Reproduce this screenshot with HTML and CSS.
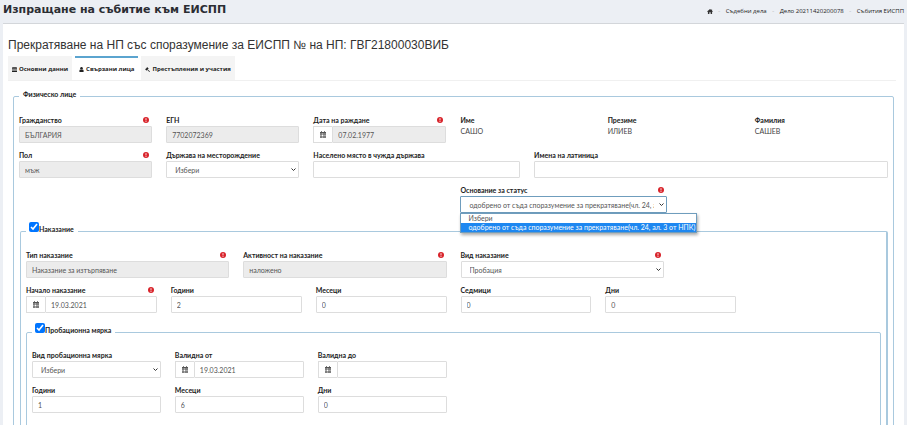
FILE: index.html
```html
<!DOCTYPE html>
<html lang="bg">
<head>
<meta charset="utf-8">
<title>Изпращане на събитие към ЕИСПП</title>
<link rel="stylesheet" href="styles.css">
</head>
<body>
<svg class="sprite" aria-hidden="true">
  <symbol id="alert" viewBox="0 0 12 12"><circle cx="6" cy="6" r="6" fill="#d8232a"/><path d="M5 2.500h2L6.700 7H5.300zM5 8h2v1.700H5z" fill="#fff"/></symbol>
  <symbol id="calendar" viewBox="0 0 14 14"><path fill="#555" fill-rule="evenodd" d="M1 2h2V.5h2V2h4V.5h2V2h2v12H1zM2 5v2h2V5zM5 5v2h2V5zM8 5v2h1.500V5zM10.500 5v2H12V5zM2 8v2h2V8zM5 8v2h2V8zM8 8v2h1.500V8zM10.500 8v2H12V8zM2 11v2h2v-2zM5 11v2h2v-2zM8 11v2h1.500v-2zM10.500 11v2H12v-2z"/></symbol>
  <symbol id="chevron" viewBox="0 0 10 6"><path d="M1 1l4 4 4-4" fill="none" stroke="#333" stroke-width="2"/></symbol>
</svg>

<header class="topbar">
  <h1>Изпращане на събитие към ЕИСПП</h1>
  <nav class="crumbs" aria-label="Навигация">
    <a href="#" aria-label="Начало"><svg class="home" viewBox="0 0 14 12"><path fill="#333" d="M7 0l3 2.600V1h2v3.300L14 6l-1 1-1-.8V12H8.500V8h-3v4H2V6.200L1 7 0 6z"/></svg></a>
    <span class="sep">-</span><a href="#">Съдебни дела</a>
    <span class="sep">-</span><a href="#">Дело 20211420200078</a>
    <span class="sep">-</span><a href="#">Събития ЕИСПП</a>
  </nav>
</header>

<main class="panel">
  <h2>Прекратяване на НП със споразумение за ЕИСПП № на НП: ГВГ21800030ВИБ</h2>

  <nav class="tabs">
    <a class="tab" href="#"><svg viewBox="0 0 12 12"><path fill="#222" d="M0 2l1-2h10l1 2zM0 3h12v2H0zM0 6h12v2H0zM0 9h12v3H0z"/></svg>Основни данни</a>
    <a class="tab active" href="#"><svg viewBox="0 0 12 12"><circle cx="6" cy="3" r="3" fill="#222"/><path fill="#222" d="M1 12V9q0-3 3-3h4q3 0 3 3v3z"/></svg>Свързани лица</a>
    <a class="tab" href="#"><svg viewBox="0 0 12 12"><path fill="#222" d="M5 0l4 4-1 1-1-.5-1 1L12 10.500 10.500 12 5 6.500l-1 1L4.500 8 3.500 9 0 5l1-1 .5.5 3-3L4 1z"/></svg>Престъпления и участия</a>
  </nav>

  <fieldset class="group">
    <legend>Физическо лице</legend>
    <div class="grid">
      <div class="field s2"><label for="cit">Гражданство<svg><use href="#alert"/></svg></label><input id="cit" value="БЪЛГАРИЯ" disabled></div>
      <div class="field s2"><label for="egn">ЕГН</label><input id="egn" value="7702072369" disabled></div>
      <div class="field s2"><label for="born">Дата на раждане<svg><use href="#alert"/></svg></label><div class="date"><svg><use href="#calendar"/></svg><input id="born" value="07.02.1977" disabled></div></div>
      <div class="field s2"><span class="name">Име</span><span class="value">САШО</span></div>
      <div class="field s2"><span class="name">Презиме</span><span class="value">ИЛИЕВ</span></div>
      <div class="field s2"><span class="name">Фамилия</span><span class="value">САШЕВ</span></div>

      <div class="field s2"><label for="sex">Пол<svg><use href="#alert"/></svg></label><input id="sex" value="мъж" disabled></div>
      <div class="field s2"><label for="country">Държава на месторождение</label><div class="select"><select id="country"><option>Избери</option></select><svg><use href="#chevron"/></svg></div></div>
      <div class="field s3"><label for="town">Населено място в чужда държава</label><input id="town"></div>
      <div class="field s5"><label for="latin">Имена на латиница</label><input id="latin"></div>

      <div class="field s3 status"><label for="basis">Основание за статус<svg><use href="#alert"/></svg></label>
        <div class="select open"><select id="basis"><option>одобрено от съда споразумение за прекратяване(чл. 24, ал. 3 от НПК)</option></select><svg><use href="#chevron"/></svg>
          <ul class="menu"><li>Избери</li><li class="chosen">одобрено от съда споразумение за прекратяване(чл. 24, ал. 3 от НПК)</li></ul>
        </div>
      </div>
    </div>

    <fieldset class="group inner">
      <legend><input type="checkbox" id="pen" checked><label for="pen">Наказание</label></legend>
      <div class="grid">
        <div class="field s3"><label for="ptype">Тип наказание<svg><use href="#alert"/></svg></label><input id="ptype" value="Наказание за изтърпяване" disabled></div>
        <div class="field s3"><label for="pact">Активност на наказание<svg><use href="#alert"/></svg></label><input id="pact" value="наложено" disabled></div>
        <div class="field s3"><label for="pkind">Вид наказание<svg><use href="#alert"/></svg></label><div class="select"><select id="pkind"><option>Пробация</option></select><svg><use href="#chevron"/></svg></div></div>
      </div>
      <div class="grid">
        <div class="field s2"><label for="pstart">Начало наказание<svg><use href="#alert"/></svg></label><div class="date"><svg><use href="#calendar"/></svg><input id="pstart" value="19.03.2021"></div></div>
        <div class="field s2"><label for="py">Години</label><input id="py" value="2"></div>
        <div class="field s2"><label for="pm">Месеци</label><input id="pm" value="0"></div>
        <div class="field s2"><label for="pw">Седмици</label><input id="pw" value="0"></div>
        <div class="field s2"><label for="pd">Дни</label><input id="pd" value="0"></div>
      </div>

      <fieldset class="group inner measure">
        <legend><input type="checkbox" id="mea" checked><label for="mea">Пробационна мярка</label></legend>
        <div class="grid">
          <div class="field s2"><label for="mkind">Вид пробационна мярка</label><div class="select"><select id="mkind"><option>Избери</option></select><svg><use href="#chevron"/></svg></div></div>
          <div class="field s2"><label for="mfrom">Валидна от</label><div class="date"><svg><use href="#calendar"/></svg><input id="mfrom" value="19.03.2021"></div></div>
          <div class="field s2"><label for="mto">Валидна до</label><div class="date"><svg><use href="#calendar"/></svg><input id="mto"></div></div>
        </div>
        <div class="grid">
          <div class="field s2"><label for="my">Години</label><input id="my" value="1"></div>
          <div class="field s2"><label for="mm">Месеци</label><input id="mm" value="6"></div>
          <div class="field s2"><label for="md">Дни</label><input id="md" value="0"></div>
        </div>
      </fieldset>
    </fieldset>
  </fieldset>
</main>
</body>
</html>
```

FILE: styles.css
```css
* { box-sizing: border-box; }
html { scrollbar-width: none; }
body {
  margin: 0;
  padding: 0 3px;
  background: #eceff4;
  color: #222;
  font: 7px/10px Lato, "Open Sans", sans-serif;
}
a { color: inherit; text-decoration: none; }
.sprite { display: none; }

.topbar {
  display: flex;
  justify-content: space-between;
  height: 24px;
  border-bottom: 1px solid #d3d6da;
}
h1 {
  margin: 0;
  font: bold 11px/19px "DejaVu Sans", sans-serif;
  color: #2b2d33;
}
.crumbs {
  display: flex;
  align-items: center;
  height: 22px;
  font-family: "Open Sans", sans-serif;
  font-size: 6px;
}
.home { display: block; width: 6px; height: 5px; }
.sep { width: 13px; text-align: center; color: #aaa; }

.panel { background: #fff; padding: 12px 8px 0 5px; }
h2 {
  margin: 0;
  font: 12px/18px "Liberation Sans", sans-serif;
  color: #333;
}
.tabs {
  display: flex;
  gap: 3px;
  margin-top: 2px;
  border-bottom: 1px solid #f0f0f0;
  font-family: "Open Sans", sans-serif;
  font-size: 6px;
  font-weight: bold;
}
.tab {
  display: flex;
  align-items: center;
  gap: 2px;
  height: 24px;
  padding: 0 4px;
  border-top: 2px solid #f4f4f4;
  background: #f4f4f4;
}
.tab svg { width: 5px; height: 5px; }
.tab.active { border-color: #5ba4cf; background: #fff; }

.group {
  min-width: 0;
  margin: 8px 2px 0 5px;
  padding: 11px 5px 10px;
  border: 1px solid #a9c9de;
  border-radius: 2px;
}
legend {
  display: flex;
  align-items: flex-start;
  height: 15px;
  padding: 0 4px;
  font-size: 7px;
  font-weight: bold;
}
.inner { margin: 9px 0 0 1px; padding-top: 9px; border-right-width: 2px; }
.inner > legend { padding-left: 3px; height: 19px; line-height: 15px; }
.measure { margin: 10px 0 0; padding: 8px 5px 14px; border-right-width: 1px; }
legend input { width: 10px; height: 10px; margin: 0; }

.grid {
  display: grid;
  grid-template-columns: repeat(12, minmax(0, 1fr));
  gap: 7px 14px;
}
.grid + .grid { margin-top: 7px; }
.s2 { grid-column: span 2; }
.s3 { grid-column: span 3; }
.s5 { grid-column: span 5; }
.status { grid-column: 7 / span 3; }

.field { display: flex; flex-direction: column; gap: 1px; min-width: 0; }
.field > label, .name {
  display: flex;
  align-items: center;
  justify-content: space-between;
  height: 10px;
  padding-right: 3px;
  font-size: 7px;
  font-weight: bold;
  white-space: nowrap;
}
.field > label svg { width: 6px; height: 6px; }
.value { color: #444; }

.field input, select {
  width: 100%;
  min-width: 0;
  height: 17px;
  margin: 0;
  padding: 0 5px;
  border: 1px solid #ddd;
  border-radius: 1px;
  background: #fff;
  color: #555;
  font: inherit;
}
.field input:disabled { background: #ececec; }
.date { display: flex; }
.date svg {
  flex: none;
  width: 19px;
  height: 17px;
  padding: 4px 5px;
  border: 1px solid #ddd;
  border-right: 0;
}
.select { position: relative; }
select {
  display: block;
  appearance: none;
  padding: 0 12px 0 8px;
}
.select > svg {
  position: absolute;
  top: 7px;
  right: 3px;
  width: 5px;
  height: 3px;
}
.open select { border-color: #6f9dbd; }
.menu {
  position: absolute;
  top: 100%;
  left: 0;
  z-index: 1;
  margin: 0;
  padding: 0;
  border: 1px solid #6f9dbd;
  background: #fff;
  box-shadow: 1px 2px 3px #0005;
  color: #555;
  line-height: 9px;
  list-style: none;
  white-space: nowrap;
}
.menu li { padding: 0 1px 0 7px; }
.menu .chosen { background: #1e87f0; color: #fff; }
```
